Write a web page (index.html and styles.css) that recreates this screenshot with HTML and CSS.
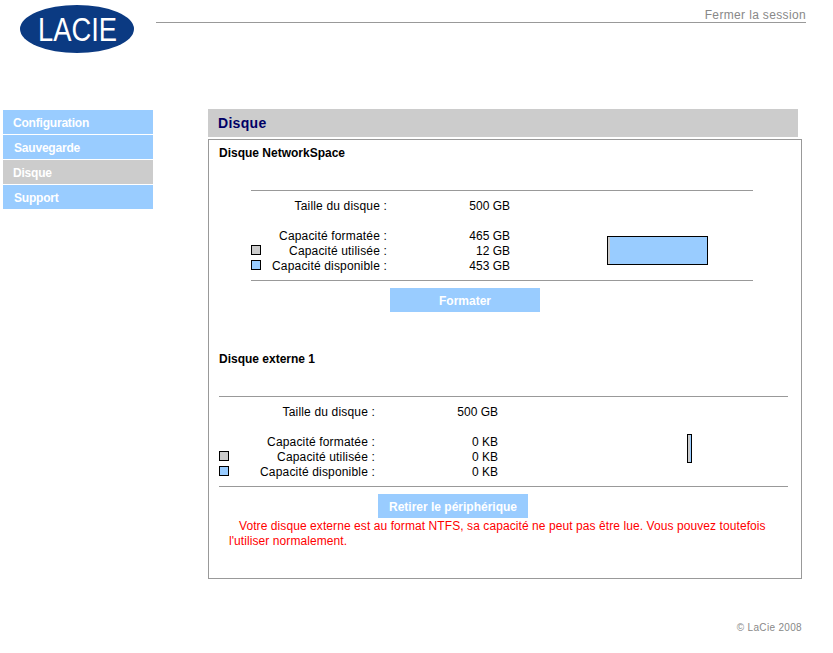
FILE: index.html
```html
<!DOCTYPE html>
<html lang="fr">
<head>
    <meta charset="UTF-8">
    <title>LaCie - Disque</title>
    <link rel="stylesheet" href="styles.css">
</head>
<body>
    <header class="top">
        <svg class="logo" width="114" height="48" viewBox="0 0 114 48">
            <ellipse cx="57" cy="24" rx="57" ry="24" fill="#0b3a82"/>
            <text x="18" y="36" class="logo-text" textLength="79" lengthAdjust="spacingAndGlyphs">LACIE</text>
        </svg>
        <div class="session">
            <a href="#">Fermer la session</a>
        </div>
    </header>

    <div class="content">
        <nav class="menu">
            <a href="#">Configuration</a>
            <a href="#" class="shifted">Sauvegarde</a>
            <a href="#" class="current">Disque</a>
            <a href="#" class="shifted">Support</a>
        </nav>

        <main class="main">
            <h1 class="title">Disque</h1>
            <div class="box">
                <section class="disk disk-internal">
                    <h2>Disque NetworkSpace</h2>
                    <div class="stats">
                        <div class="label">Taille du disque :</div>
                        <div class="value">500 GB</div>
                        <div class="spacer"></div>
                        <div class="label">Capacité formatée :</div>
                        <div class="value">465 GB</div>
                        <div class="bar"><span class="bar-used" style="width: 2%"></span></div>
                        <div class="label"><span class="swatch used"></span>Capacité utilisée :</div>
                        <div class="value">12 GB</div>
                        <div class="label"><span class="swatch free"></span>Capacité disponible :</div>
                        <div class="value">453 GB</div>
                    </div>
                    <a href="#" class="btn">Formater</a>
                </section>

                <section class="disk disk-external">
                    <h2>Disque externe 1</h2>
                    <div class="stats">
                        <div class="label">Taille du disque :</div>
                        <div class="value">500 GB</div>
                        <div class="spacer"></div>
                        <div class="label">Capacité formatée :</div>
                        <div class="value">0 KB</div>
                        <div class="bar"><span class="bar-used" style="width: 67%"></span></div>
                        <div class="label"><span class="swatch used"></span>Capacité utilisée :</div>
                        <div class="value">0 KB</div>
                        <div class="label"><span class="swatch free"></span>Capacité disponible :</div>
                        <div class="value">0 KB</div>
                    </div>
                    <a href="#" class="btn">Retirer le périphérique</a>
                    <p class="warning">Votre disque externe est au format NTFS, sa capacité ne peut pas être lue. Vous pouvez toutefois l'utiliser normalement.</p>
                </section>
            </div>
        </main>
    </div>

    <footer class="footer">© LaCie 2008</footer>
</body>
</html>
```

FILE: styles.css
```css
body {
    margin: 0;
    font-family: "Liberation Sans", Arial, sans-serif;
    font-size: 12px;
    line-height: 15px;
    color: #000;
    background-color: #fff;
}

a {
    text-decoration: none;
}

.top {
    display: flex;
    align-items: flex-start;
    height: 109px;
    padding-left: 20px;
    box-sizing: border-box;
    padding-top: 5px;
}

.logo {
    display: block;
    flex: none;
}

.logo-text {
    font-family: "Liberation Sans", Arial, sans-serif;
    font-size: 33px;
    fill: #fff;
}

.session {
    width: 650px;
    height: 17px;
    margin-left: 22px;
    border-bottom: 1px solid #999;
    text-align: right;
}

.session a {
    color: #888;
    line-height: 21px;
    letter-spacing: 0.35px;
}

.content {
    display: flex;
    align-items: flex-start;
}

.menu {
    display: flex;
    flex-direction: column;
    gap: 1px;
    width: 150px;
    margin: 1px 0 0 3px;
}

.menu a {
    height: 24px;
    padding-left: 10px;
    line-height: 27px;
    font-weight: bold;
    letter-spacing: -0.2px;
    color: #fff;
    background-color: #99ccff;
}

.menu a.shifted {
    padding-left: 11px;
}

.menu a.current {
    background-color: #cccccc;
}

.main {
    width: 594px;
    margin-left: 55px;
}

.title {
    width: 580px;
    height: 28px;
    margin: 0 0 2px;
    padding-left: 10px;
    font-size: 14px;
    line-height: 28px;
    letter-spacing: 0.3px;
    color: #000066;
    background-color: #cccccc;
}

.box {
    width: 582px;
    height: 432px;
    padding: 6px 0 0 10px;
    border: 1px solid #999;
}

.disk {
    width: 569px;
}

.disk h2 {
    margin: 0 0 29px;
    font-size: 12px;
    line-height: 15px;
}

.disk-internal .stats,
.disk-internal .btn {
    margin-left: 32px;
}

.disk-external {
    margin-top: 40px;
}

.stats {
    display: grid;
    grid-template-columns: 156px 123px 1fr;
    padding: 8px 0 6px;
    border-top: 1px solid #999;
    border-bottom: 1px solid #999;
}

.disk-internal .stats {
    grid-template-columns: 136px 123px 1fr;
    width: 502px;
}

.label {
    position: relative;
    text-align: right;
    letter-spacing: 0.17px;
}

.value {
    text-align: right;
}

.spacer {
    grid-column: 1 / -1;
    height: 15px;
}

.stats > .value:nth-child(2) {
    grid-column: 2 / -1;
    justify-self: start;
    width: 123px;
}

.swatch {
    position: absolute;
    left: 0;
    top: 1px;
    width: 8px;
    height: 8px;
    border: 1px solid #000;
}

.swatch.used {
    background-color: #cccccc;
}

.swatch.free {
    background-color: #99ccff;
}

.bar {
    grid-column: 3;
    grid-row: 3 / span 3;
    box-sizing: border-box;
    height: 29px;
    border: 1px solid #000;
    background-color: #99ccff;
}

.disk-internal .bar {
    width: 101px;
    margin: 7px 0 0 97px;
}

.disk-external .bar {
    width: 5px;
    margin: -1px 0 0 189px;
}

.bar-used {
    display: block;
    height: 100%;
    background-color: #cccccc;
}

.btn {
    display: block;
    width: 150px;
    height: 24px;
    margin-top: 7px;
    line-height: 27px;
    text-align: center;
    font-weight: bold;
    color: #fff;
    background-color: #99ccff;
}

.disk-internal .btn {
    margin-left: 171px;
}

.disk-external .btn {
    margin-left: 159px;
}

.warning {
    margin: 1px 0 0 10px;
    text-indent: 10px;
    letter-spacing: 0.08px;
    color: #ff0000;
}

.footer {
    width: 802px;
    margin-top: 41px;
    text-align: right;
    font-size: 10px;
    letter-spacing: 0.33px;
    color: #888;
}
```
